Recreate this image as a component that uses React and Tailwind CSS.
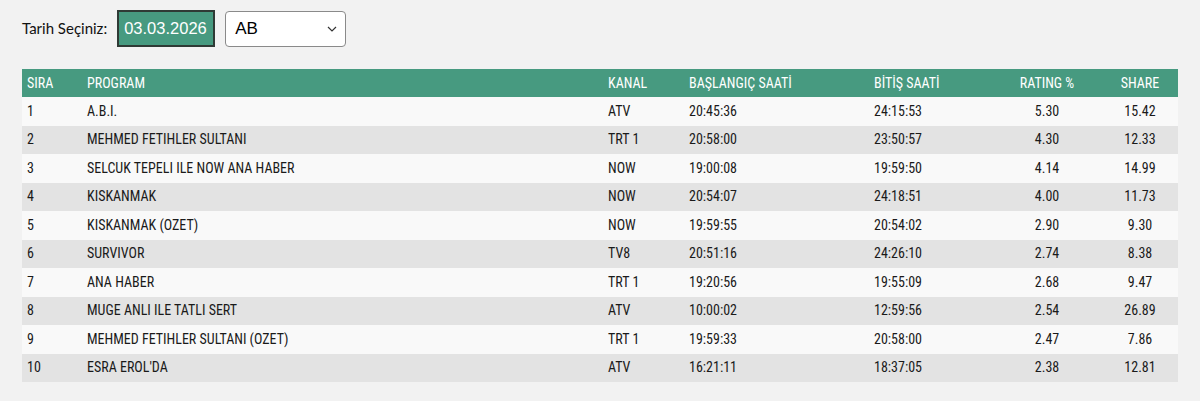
import React from 'react';

const rows = [
  ['1', 'A.B.I.', 'ATV', '20:45:36', '24:15:53', '5.30', '15.42'],
  ['2', 'MEHMED FETIHLER SULTANI', 'TRT 1', '20:58:00', '23:50:57', '4.30', '12.33'],
  ['3', 'SELCUK TEPELI ILE NOW ANA HABER', 'NOW', '19:00:08', '19:59:50', '4.14', '14.99'],
  ['4', 'KISKANMAK', 'NOW', '20:54:07', '24:18:51', '4.00', '11.73'],
  ['5', 'KISKANMAK (OZET)', 'NOW', '19:59:55', '20:54:02', '2.90', '9.30'],
  ['6', 'SURVIVOR', 'TV8', '20:51:16', '24:26:10', '2.74', '8.38'],
  ['7', 'ANA HABER', 'TRT 1', '19:20:56', '19:55:09', '2.68', '9.47'],
  ['8', 'MUGE ANLI ILE TATLI SERT', 'ATV', '10:00:02', '12:59:56', '2.54', '26.89'],
  ['9', 'MEHMED FETIHLER SULTANI (OZET)', 'TRT 1', '19:59:33', '20:58:00', '2.47', '7.86'],
  ['10', "ESRA EROL'DA", 'ATV', '16:21:11', '18:37:05', '2.38', '12.81'],
];

const cond = { fontFamily: '"Roboto Condensed", "Liberation Sans Narrow", Roboto, sans-serif' };

export default function App() {
  return (
    <div className="w-[1200px] h-[401px] bg-[#f2f2f2] px-[22px] pt-[10px]">
      <div className="flex items-center h-[37px]">
        <span className="text-[15px] text-[#111] font-['Lato',sans-serif] mr-[10px]">Tarih Seçiniz:</span>
        <div className="w-[98px] h-[37px] bg-[#479a80] border-2 border-[#2f3a35] flex items-center pl-[5px] text-white text-[16.5px] font-['Liberation_Sans',sans-serif]">
          03.03.2026
        </div>
        <div className="ml-[10px] w-[121px] h-[36px] bg-white border border-[#8a8a8a] rounded-[4px] flex items-center justify-between pl-[9px] pr-[8px] text-[17px] text-black font-['Liberation_Sans',sans-serif]">
          <span>AB</span>
          <svg width="10" height="6" viewBox="0 0 10 6" fill="none" stroke="#333" strokeWidth="1.2">
            <path d="M1 1l4 4 4-4" />
          </svg>
        </div>
      </div>
      <table className="mt-[22px] w-[1156px] table-fixed border-collapse text-[14px]" style={cond}>
        <colgroup>
          <col className="w-[60px]" />
          <col className="w-[521px]" />
          <col className="w-[81px]" />
          <col className="w-[185px]" />
          <col className="w-[123px]" />
          <col className="w-[110px]" />
          <col className="w-[76px]" />
        </colgroup>
        <thead>
          <tr className="bg-[#479a80] text-white h-[28px]">
            <th className="text-left font-normal pl-[5px]">SIRA</th>
            <th className="text-left font-normal pl-[5px]">PROGRAM</th>
            <th className="text-left font-normal pl-[5px]">KANAL</th>
            <th className="text-left font-normal pl-[5px]">BAŞLANGIÇ SAATİ</th>
            <th className="text-left font-normal pl-[5px]">BİTİŞ SAATİ</th>
            <th className="text-center font-normal">RATING %</th>
            <th className="text-center font-normal">SHARE</th>
          </tr>
        </thead>
        <tbody className="text-[#1a1a1a]">
          {rows.map((r, i) => (
            <tr key={r[0]} className={i % 2 === 0 ? 'bg-[#f9f9f9] h-[28.5px]' : 'bg-[#e3e3e3] h-[28.5px]'}>
              <td className="pl-[5px]">{r[0]}</td>
              <td className="pl-[5px]">{r[1]}</td>
              <td className="pl-[5px]">{r[2]}</td>
              <td className="pl-[5px]">{r[3]}</td>
              <td className="pl-[5px]">{r[4]}</td>
              <td className="text-center">{r[5]}</td>
              <td className="text-center">{r[6]}</td>
            </tr>
          ))}
        </tbody>
      </table>
    </div>
  );
}
